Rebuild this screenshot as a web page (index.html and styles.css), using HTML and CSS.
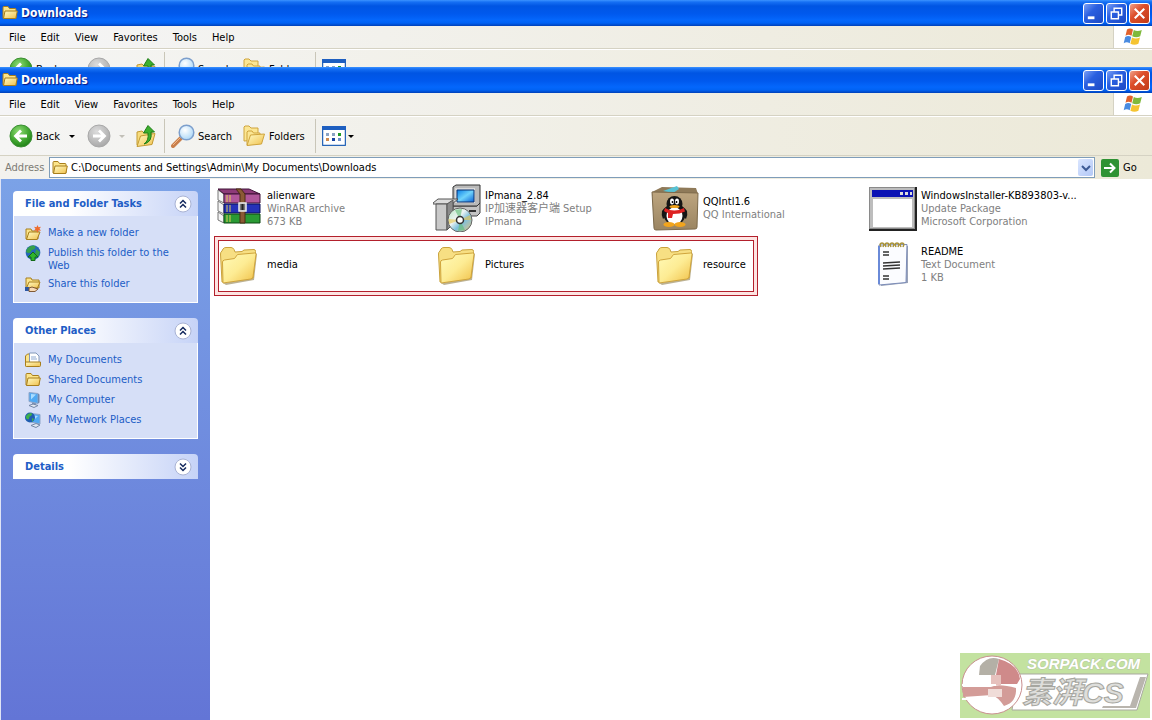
FILE: index.html
```html
<!DOCTYPE html>
<html lang="en">
<head>
  <meta charset="UTF-8" />
  <meta name="viewport" content="width=device-width, initial-scale=1" />
  <title>Downloads</title>
  <link rel="stylesheet" href="styles.css">
</head>
<body>
  <svg class="sprite" width="0" height="0" aria-hidden="true">
    <defs>
      <linearGradient id="gFolder" x1="0" y1="0" x2="1" y2="1">
        <stop offset="0" stop-color="#fffbc4" />
        <stop offset="1" stop-color="#f0c04c" />
      </linearGradient>
      <linearGradient id="gBigFolder" x1="0" y1="0" x2="1" y2="1">
        <stop offset="0" stop-color="#fffab8" />
        <stop offset="0.5" stop-color="#fdec94" />
        <stop offset="1" stop-color="#f0bf45" />
      </linearGradient>
      <radialGradient id="gGreen" cx="0.4" cy="0.3" r="0.75">
        <stop offset="0" stop-color="#8fdc74" />
        <stop offset="0.6" stop-color="#3fa52f" />
        <stop offset="1" stop-color="#1d7d14" />
      </radialGradient>
      <radialGradient id="gGrey" cx="0.4" cy="0.3" r="0.8">
        <stop offset="0" stop-color="#dcdcdc" />
        <stop offset="1" stop-color="#a2a2a2" />
      </radialGradient>
      <radialGradient id="gLens" cx="0.4" cy="0.35" r="0.7">
        <stop offset="0" stop-color="#ffffff" />
        <stop offset="1" stop-color="#a9d6f7" />
      </radialGradient>
      <linearGradient id="gScreen" x1="0" y1="0" x2="1" y2="1">
        <stop offset="0" stop-color="#0a7fe8" />
        <stop offset="0.5" stop-color="#6fd3fb" />
        <stop offset="1" stop-color="#0a62d8" />
      </linearGradient>
      <linearGradient id="gBox" x1="0" y1="0" x2="0" y2="1">
        <stop offset="0" stop-color="#bda57f" />
        <stop offset="1" stop-color="#9b8562" />
      </linearGradient>
      <linearGradient id="gCd" x1="0" y1="0" x2="1" y2="1">
        <stop offset="0" stop-color="#b7e4c0" />
        <stop offset="0.4" stop-color="#eef4f4" />
        <stop offset="0.6" stop-color="#7ec0dc" />
        <stop offset="1" stop-color="#e6c37b" />
      </linearGradient>

      <symbol id="folder" viewBox="0 0 16 16">
        <path d="M1 13V2.500q0-1 1-1h4l1.500 2h5.500q1 0 1 1V13z" fill="#fbe48a" stroke="#a87e1c" />
        <path d="M1.500 13.500L3 6h12.300L13.800 13.500z" fill="url(#gFolder)" stroke="#a87e1c" />
      </symbol>
      <symbol id="back" viewBox="0 0 24 24">
        <circle cx="12" cy="12" r="11" fill="url(#gGreen)" stroke="#3b8f33" />
        <path d="M18 12H7.500M12 6.500L6.500 12l5.500 5.500" fill="none" stroke="#fff" stroke-width="2.800" />
      </symbol>
      <symbol id="forward" viewBox="0 0 24 24">
        <circle cx="12" cy="12" r="11" fill="url(#gGrey)" stroke="#a8a8a8" />
        <path d="M6 12h10.500M12 6.500l5.500 5.500-5.500 5.500" fill="none" stroke="#fff" stroke-width="2.800" />
      </symbol>
      <symbol id="up" viewBox="0 0 24 24">
        <path d="M3 21V8l5-1 1.500 1.500L18 8v11z" fill="#f7dc7d" stroke="#c39a32" />
        <path d="M3 22.500L6.500 12 21 9.500 18 20.500z" fill="url(#gFolder)" stroke="#c39a32" />
        <path d="M10 20q5-3 4-11h-4.500L14 1.500 20.500 8h-3.500q1.500 10-7 12z" fill="#3db02e" stroke="#1f7d17" />
      </symbol>
      <symbol id="search" viewBox="0 0 24 24">
        <path d="M2 22l8-8" stroke="#c97f4b" stroke-width="4" stroke-linecap="round" />
        <path d="M2 21l8-8" stroke="#f0b88a" stroke-width="1" />
        <circle cx="15.500" cy="8.500" r="7.300" fill="url(#gLens)" stroke="#7d9fcc" stroke-width="1.500" />
      </symbol>
      <symbol id="folders" viewBox="0 0 24 24">
        <path d="M2 17V3l1-1h4l2 2h7v12z" fill="#fbe694" stroke="#cfa43c" />
        <path d="M5 21V8l1-1h4l1.500 2H18v10z" fill="#fbe694" stroke="#cfa43c" />
        <path d="M5 21.500l3.500-10.500L22.500 10l-3 10z" fill="url(#gFolder)" stroke="#cfa43c" />
      </symbol>
      <symbol id="views" viewBox="0 0 24 20">
        <rect x="0.500" y="0.500" width="23" height="19" rx="1" fill="#fff" stroke="#2866b8" stroke-width="1.500" />
        <path d="M0 0h24v4H0z" fill="#1e5fc0" />
        <path d="M4 7h3v3H4zM10 7h3v3h-3z" fill="#8ba3c4" />
        <path d="M16 7h3v3h-3z" fill="#1f9a26" />
        <path d="M4 12h3v3H4z" fill="#d08b4e" />
        <path d="M10 12h3v3h-3z" fill="#1642a0" />
        <path d="M16 12h3v3h-3z" fill="#6f90c8" />
      </symbol>
      <symbol id="flag" viewBox="0 0 20 20">
        <path d="M4 2.500q3-2 6 0L8.500 8.800q-3-2-6 0z" fill="#e2622b" />
        <path d="M10.800 3q3.500 2 8 0L17.200 9.200q-4 2-8 0z" fill="#7fb93c" />
        <path d="M2.200 10q3-2 6 0L6.700 16.300q-3-2-6 0z" fill="#4a8be0" />
        <path d="M9 10.500q3.500 2 8 0L15.400 16.800q-4 2-8 0z" fill="#f5c431" />
      </symbol>
      <symbol id="chev-up" viewBox="0 0 18 18">
        <circle cx="9" cy="9" r="8" fill="#fff" stroke="#a9b3d4" />
        <path d="M6 8.500l3-3 3 3M6 12.500l3-3 3 3" fill="none" stroke="#14295e" stroke-width="1.500" />
      </symbol>
      <symbol id="chev-down" viewBox="0 0 18 18">
        <circle cx="9" cy="9" r="8" fill="#fff" stroke="#a9b3d4" />
        <path d="M6 5.500l3 3 3-3M6 9.500l3 3 3-3" fill="none" stroke="#14295e" stroke-width="1.500" />
      </symbol>
      <symbol id="big-folder" viewBox="0 0 48 48">
        <path d="M8 43l30-5 3-25 1 1-3 26-28 5z" fill="#8f7f4c" opacity="0.600" />
        <path d="M7 42L5.500 14q0-2 1.500-3l1-2q1-1.500 3-1.500h5q2 0 3 2l1 2.500 7-.5 2-1.500 10-.5q1.500 0 1.500 2L38 38z" fill="#f7df83" stroke="#c9a23c" />
        <path d="M8 43L7.500 22q0-1.500 2-2l10-1.500 3-4L39.500 13q1.500 0 1.500 1.500L38 37q-.3 1.500-2 2z" fill="url(#gBigFolder)" stroke="#d0a53c" />
      </symbol>
    </defs>
  </svg>

  <!-- window behind, only its top strip shows -->
  <div class="window window-behind">
    <header class="titlebar">
      <svg class="icon16"><use href="#folder" /></svg>
      <h2>Downloads</h2>
      <div class="controls">
        <button class="ctl" aria-label="Minimize"><svg viewBox="0 0 20 20"><path d="M4 13h7v3H4z" fill="#fff" /></svg></button>
        <button class="ctl" aria-label="Restore"><svg viewBox="0 0 20 20"><path d="M7.500 8V4.500h8v7H12M4.500 8.500h7.500v7H4.500z" fill="none" stroke="#fff" stroke-width="1.500" /></svg></button>
        <button class="ctl ctl-close" aria-label="Close"><svg viewBox="0 0 20 20"><path d="M5 5l10 10M15 5L5 15" stroke="#fff" stroke-width="2.200" /></svg></button>
      </div>
    </header>
    <nav class="menubar">
      <button>File</button>
      <button>Edit</button>
      <button>View</button>
      <button>Favorites</button>
      <button>Tools</button>
      <button>Help</button>
      <span class="brand"><svg><use href="#flag" /></svg></span>
    </nav>
    <div class="toolbar">
      <button class="tool tool-back"><svg class="icon24"><use href="#back" /></svg>Back<i class="arrow"></i></button>
      <button class="tool tool-forward" aria-label="Forward" disabled><svg class="icon24"><use href="#forward" /></svg><i class="arrow"></i></button>
      <button class="tool" aria-label="Up"><svg class="icon24"><use href="#up" /></svg></button>
      <span class="sep"></span>
      <button class="tool tool-search"><svg class="icon24"><use href="#search" /></svg>Search</button>
      <button class="tool tool-folders"><svg class="icon24"><use href="#folders" /></svg>Folders</button>
      <span class="sep"></span>
      <button class="tool tool-views" aria-label="Views"><svg class="icon-views"><use href="#views" /></svg><i class="arrow"></i></button>
    </div>
  </div>

  <div class="window window-front">
    <header class="titlebar">
      <svg class="icon16"><use href="#folder" /></svg>
      <h1>Downloads</h1>
      <div class="controls">
        <button class="ctl" aria-label="Minimize"><svg viewBox="0 0 20 20"><path d="M4 13h7v3H4z" fill="#fff" /></svg></button>
        <button class="ctl" aria-label="Restore"><svg viewBox="0 0 20 20"><path d="M7.500 8V4.500h8v7H12M4.500 8.500h7.500v7H4.500z" fill="none" stroke="#fff" stroke-width="1.500" /></svg></button>
        <button class="ctl ctl-close" aria-label="Close"><svg viewBox="0 0 20 20"><path d="M5 5l10 10M15 5L5 15" stroke="#fff" stroke-width="2.200" /></svg></button>
      </div>
    </header>
    <nav class="menubar">
      <button>File</button>
      <button>Edit</button>
      <button>View</button>
      <button>Favorites</button>
      <button>Tools</button>
      <button>Help</button>
      <span class="brand"><svg><use href="#flag" /></svg></span>
    </nav>
    <div class="toolbar">
      <button class="tool tool-back"><svg class="icon24"><use href="#back" /></svg>Back<i class="arrow"></i></button>
      <button class="tool tool-forward" aria-label="Forward" disabled><svg class="icon24"><use href="#forward" /></svg><i class="arrow"></i></button>
      <button class="tool" aria-label="Up"><svg class="icon24"><use href="#up" /></svg></button>
      <span class="sep"></span>
      <button class="tool tool-search"><svg class="icon24"><use href="#search" /></svg>Search</button>
      <button class="tool tool-folders"><svg class="icon24"><use href="#folders" /></svg>Folders</button>
      <span class="sep"></span>
      <button class="tool tool-views" aria-label="Views"><svg class="icon-views"><use href="#views" /></svg><i class="arrow"></i></button>
    </div>
    <form class="addressbar">
      <label for="address">Address</label>
      <div class="address-box">
        <svg class="icon16"><use href="#folder" /></svg>
        <input type="text" id="address" value="C:\Documents and Settings\Admin\My Documents\Downloads" />
        <button type="button" class="drop" aria-label="Show addresses"><svg viewBox="0 0 10 8"><path d="M1 2l4 4 4-4" fill="none" stroke="#3d5a94" stroke-width="2" /></svg></button>
      </div>
      <button type="button" class="go"><svg viewBox="0 0 18 18"><rect width="18" height="18" rx="2" fill="#2f9233" /><path d="M3 9h10M9 4.500L13.500 9 9 13.500" fill="none" stroke="#fff" stroke-width="2" /></svg>Go</button>
    </form>

    <div class="content">
      <aside class="sidebar">
        <section class="panel">
          <div class="panel-head">
            <h3>File and Folder Tasks</h3>
            <button class="toggle" aria-label="Collapse"><svg><use href="#chev-up" /></svg></button>
          </div>
          <ul>
            <li><a href="#">
              <svg class="icon16" viewBox="0 0 16 16"><path d="M1 14V4h5l1 2h6v8z" fill="#fbe48a" stroke="#a87e1c" /><path d="M1.500 14.500L4 7h11l-3 7.500z" fill="url(#gFolder)" stroke="#a87e1c" /><path d="M12.500 0l1 2.200 2.500-.5-1.500 2 1.500 2-2.500-.3-1 2.400-1-2.400-2.500.3 1.500-2-1.500-2 2.500.5z" fill="#ee6b2d" /></svg>
              <span>Make a new folder</span></a></li>
            <li><a href="#">
              <svg class="icon16" viewBox="0 0 16 16"><circle cx="8" cy="7.500" r="7.300" fill="#2467b8" /><path d="M2 4q3-4 7-3.500 3 2 0 4-3-.5-3 2.500-2 2-5 0zM11 4l4 3-2 5-3-3z" fill="#35a04a" /><path d="M8 7l5 5h-3v3.500H6V12H3z" fill="#2fb52c" stroke="#126b18" /></svg>
              <span>Publish this folder to the Web</span></a></li>
            <li><a href="#">
              <svg class="icon16" viewBox="0 0 16 16"><path d="M1 12V2h5l1 2h7v8z" fill="#fbe48a" stroke="#a87e1c" /><path d="M1.500 12L4 6h11l-2.500 6z" fill="url(#gFolder)" stroke="#a87e1c" /><path d="M0 11h4v4H0z" fill="#2b57a5" /><path d="M4 12l3-1 6 2-3 2.500H4z" fill="#f7d9b5" stroke="#805a35" /></svg>
              <span>Share this folder</span></a></li>
          </ul>
        </section>

        <section class="panel">
          <div class="panel-head">
            <h3>Other Places</h3>
            <button class="toggle" aria-label="Collapse"><svg><use href="#chev-up" /></svg></button>
          </div>
          <ul>
            <li><a href="#">
              <svg class="icon16" viewBox="0 0 16 16"><path d="M.5 14V4l2-2H7v12z" fill="#fbe48a" stroke="#a87e1c" /><path d="M4.500 1H11l3 3v8H4.500z" fill="#fff" stroke="#8398b8" /><path d="M6 5h5M6 7h6" stroke="#8fa9d0" /><path d="M1.500 14.500q-1 0-1-1V10h15v3.500q0 1-1 1z" fill="url(#gFolder)" stroke="#a87e1c" /></svg>
              <span>My Documents</span></a></li>
            <li><a href="#"><svg class="icon16"><use href="#folder" /></svg><span>Shared Documents</span></a></li>
            <li><a href="#">
              <svg class="icon16" viewBox="0 0 16 16"><path d="M4 0.500l9 1v10L4 9.500z" fill="#4fa9f3" stroke="#8ea5c8" /><path d="M6 2l5 .5-5 5z" fill="#a9dcff" /><path d="M13 1.500l1.500 1v8L13 11.500z" fill="#7088ad" /><path d="M7 10.500l4 .8V13H7z" fill="#7d94b5" /><path d="M4 13.500l4-1.500 5 1.500-4 2z" fill="#e3e9f2" stroke="#7386a6" /></svg>
              <span>My Computer</span></a></li>
            <li><a href="#">
              <svg class="icon16" viewBox="0 0 16 16"><path d="M6 1.500l9 1v9.500L6 10z" fill="#4fa9f3" stroke="#8ea5c8" /><path d="M9 3.500l4 .5-4 4z" fill="#a9dcff" /><path d="M6 13.500l5-2 4 1.500-4 2.500z" fill="#e3e9f2" stroke="#7386a6" /><circle cx="5" cy="5.500" r="5" fill="#1f5db0" /><path d="M1 4q2-3 5-3 2 1 0 3-2 0-2 3-2 1-3-1zM7 6l2 1-2 3z" fill="#3db04a" /></svg>
              <span>My Network Places</span></a></li>
          </ul>
        </section>

        <section class="panel">
          <div class="panel-head">
            <h3>Details</h3>
            <button class="toggle" aria-label="Expand"><svg><use href="#chev-down" /></svg></button>
          </div>
        </section>
      </aside>

      <main class="files">
        <div class="file">
          <svg class="icon48" viewBox="0 0 48 48">
            <path d="M3 6l6 4v9l-6-3zM3 17l6 4v9l-6-3zM3 28l6 4v7l-6-3z" fill="#f4f4f4" stroke="#777" />
            <path d="M3 5h31l11 5H9z" fill="#8d3a78" stroke="#3f1237" />
            <path d="M9 10h36v9H9z" fill="#b0569a" stroke="#3f1237" />
            <path d="M9 20h36v9H9z" fill="#2531b8" stroke="#0b1159" />
            <path d="M9 30h36v9H9z" fill="#2a9a34" stroke="#0c4712" />
            <path d="M12 11v7M15 11v7M12 21v7M15 21v7M12 31v7M15 31v7" stroke="#e2cf55" />
            <path d="M21 5h5l4 5v29h-5V10z" fill="#8b5a35" stroke="#4a2c14" />
            <rect x="24" y="19" width="7" height="8" fill="#777" stroke="#eee" stroke-width="1.500" />
            <path d="M27.500 20v6" stroke="#222" stroke-width="2" />
          </svg>
          <div class="info"><b>alienware</b><span>WinRAR archive</span><span>673 KB</span></div>
        </div>
        <div class="file">
          <svg class="icon48" viewBox="0 0 48 48">
            <path d="M20 22h24l3-3v10l-3 3H20z" fill="#c3c3c3" stroke="#444" />
            <path d="M36 27h7" stroke="#333" stroke-width="2" />
            <path d="M20 3l3-2h24v18l-3 3H20z" fill="#b9b9b9" stroke="#333" />
            <path d="M22 4h20v15H22z" fill="#d9d9d9" />
            <path d="M24 6h17v12H24z" fill="url(#gScreen)" stroke="#0b3372" />
            <path d="M0 19l5-4h20l-6 5H0z" fill="#dcdcdc" stroke="#555" />
            <path d="M3 20h11v26H3z" fill="#c9c9c9" stroke="#555" />
            <path d="M14 20l6-4v24l-6 6z" fill="#8b8b8b" stroke="#555" />
            <circle cx="27" cy="36" r="12" fill="url(#gCd)" stroke="#666" />
            <path d="M27 36l-5-10 7-1zM27 36l5 10-7 1z" fill="#5dbd75" opacity="0.600" />
            <path d="M27 36l10-5 1 5zM27 36l-11 4-.5-5z" fill="#eac44f" opacity="0.600" />
            <circle cx="27" cy="36" r="3.500" fill="#fff" stroke="#333" stroke-width="1.500" />
          </svg>
          <div class="info"><b>IPmana_2.84</b><span>IP加速器客户端 Setup</span><span>IPmana</span></div>
        </div>
        <div class="file">
          <svg class="icon48" viewBox="0 0 48 48">
            <path d="M1 8l10-5 34 1 2 6-1 2H1z" fill="#8f7a59" />
            <path d="M12 7l14-5 2 3-6 4z" fill="#57c2d4" />
            <path d="M1 8l46 1-1 34q0 2-2 2L5 46q-2 0-2-2z" fill="url(#gBox)" stroke="#7c694a" />
            <path d="M11 27q2-3 4-4l0 9-3 3q-2-4-1-8zM36 27q-2-3-4-4l0 9 3 3q2-4 1-8z" fill="#151515" />
            <ellipse cx="23.500" cy="30" rx="11" ry="11" fill="#151515" />
            <ellipse cx="23.500" cy="20" rx="8" ry="8" fill="#151515" />
            <ellipse cx="23.500" cy="32" rx="8" ry="8.500" fill="#fff" />
            <ellipse cx="18" cy="40.500" rx="5.500" ry="2.500" fill="#f2a51d" />
            <ellipse cx="29" cy="40.500" rx="5.500" ry="2.500" fill="#f2a51d" />
            <ellipse cx="21" cy="17.500" rx="2" ry="3" fill="#fff" />
            <ellipse cx="26" cy="17.500" rx="2" ry="3" fill="#fff" />
            <path d="M21.500 17v2M25.500 17v2" stroke="#111" stroke-width="1.500" />
            <ellipse cx="23.500" cy="22.500" rx="5" ry="1.600" fill="#f2a51d" />
            <path d="M14 24q9 5 19 0l1 3.500q-5 2.500-12 2.500l-1 4h-4v-5q-3-1-4-2z" fill="#dd2222" />
          </svg>
          <div class="info"><b>QQIntl1.6</b><span>QQ International</span></div>
        </div>
        <div class="file">
          <svg class="icon48" viewBox="0 0 48 48">
            <path d="M0 3h48v44H0z" fill="#222" />
            <path d="M0 3h46v42H0z" fill="#8a8a8a" />
            <path d="M1 4h44v40H1z" fill="#bdbdbd" />
            <path d="M3 6h41v7H3z" fill="#0a12b4" />
            <path d="M31 8h3v3h-3zM36 8h3v3h-3zM41 8h2v3h-2z" fill="#ddd" />
            <path d="M4 15h39v28H4z" fill="#fff" />
          </svg>
          <div class="info"><b>WindowsInstaller-KB893803-v...</b><span>Update Package</span><span>Microsoft Corporation</span></div>
        </div>
        <div class="file">
          <svg class="icon48"><use href="#big-folder" /></svg>
          <div class="info"><b>media</b></div>
        </div>
        <div class="file">
          <svg class="icon48"><use href="#big-folder" /></svg>
          <div class="info"><b>Pictures</b></div>
        </div>
        <div class="file">
          <svg class="icon48"><use href="#big-folder" /></svg>
          <div class="info"><b>resource</b></div>
        </div>
        <div class="file">
          <svg class="icon48" viewBox="0 0 48 48">
            <path d="M12 7l27-1 0 37-27 3z" fill="#9aa3b8" />
            <path d="M10 5l28-.5-1 38L10 45z" fill="#fbfcff" stroke="#7b8cb8" />
            <path d="M10 6v38" stroke="#6a8ad8" stroke-width="2" />
            <path d="M12 7q-2-4 1-4t1 4M17 7q-2-4 1-4t1 4M22 7q-2-4 1-4t1 4M27 7q-2-4 1-4t1 4M32 7q-2-4 1-4t1 4" fill="none" stroke="#a8923a" stroke-width="1.500" />
            <path d="M14 12h6M14 15h6M14 23l17-1M14 26l17-1M14 29l17-1M14 36h6M14 39h6" stroke="#333" stroke-width="1.300" />
          </svg>
          <div class="info"><b>README</b><span>Text Document</span><span>1 KB</span></div>
        </div>
        <div class="marker"></div>
      </main>
    </div>
  </div>

  <svg class="watermark" viewBox="0 0 190 65" role="img" aria-label="SORPACK.COM">
    <rect width="190" height="65" fill="#c3e2a0" />
    <path d="M58 21h130l-11 36H52z" fill="#fff" stroke="#a9a9a0" />
    <path d="M180 24h6l-10 31h-34l1-2h27z" fill="#b9b5ae" />
    <ellipse cx="32" cy="32" rx="30" ry="29" fill="#fff" stroke="#c98f8f" />
    <path d="M20 13Q28 2 39 6l-4 16H19z" fill="#b4b0a6" />
    <path d="M39 6q19 5 21 20l-3 5H36V22z" fill="#cf8a8a" />
    <path d="M31 22h10v10H31z" fill="#e6c1bd" />
    <path d="M3 34h28q7-4 25 1 1 14-12 18-6-9-12-11L3 44z" fill="#d39c98" />
    <path d="M28 36h14v8H28z" fill="#f0dcd8" />
    <path d="M2 32h34M2 46h28q4 2 6 8" fill="none" stroke="#fff" stroke-width="2" />
    <text class="wm-site" x="67" y="16">SORPACK.COM</text>
    <text class="wm-name" x="62" y="50">素湃CS</text>
  </svg>
</body>
</html>
```
FILE: styles.css
```css
* {
  box-sizing: border-box;
}

body {
  margin: 0;
  height: 100vh;
  display: flex;
  flex-direction: column;
  overflow: hidden;
  background: #fff;
  font-family: "DejaVu Sans Condensed", "DejaVu Sans", "Noto Sans CJK SC", sans-serif;
  font-size: 11px;
  line-height: 13px;
  color: #000;
}

button, input {
  font: inherit;
  color: inherit;
  border: none;
  background: none;
  padding: 0;
  margin: 0;
}

h1, h2, h3 {
  margin: 0;
}

svg {
  display: block;
  flex: none;
}

.sprite {
  position: absolute;
}

.icon16 {
  width: 16px;
  height: 16px;
}

.icon24 {
  width: 24px;
  height: 24px;
}

.icon48 {
  width: 48px;
  height: 48px;
}

.icon-views {
  width: 24px;
  height: 20px;
}

.window {
  display: flex;
  flex-direction: column;
}

.window > * {
  flex: none;
}

.window-behind {
  flex: 0 0 67px;
  overflow: hidden;
}

.window-front {
  flex: 1;
  min-height: 0;
}

/* title bar */

.titlebar {
  height: 26px;
  display: flex;
  align-items: center;
  gap: 3px;
  padding: 0 2px;
  background: linear-gradient(#3c93ff 0, #1670f4 2px, #0055e3 6px, #0059ee 14px, #0467fc 20px, #0062f4 23px, #0040b8 26px);
}

.titlebar h1, .titlebar h2 {
  flex: 1;
  font-size: 12px;
  line-height: 16px;
  font-weight: bold;
  color: #fff;
  text-shadow: 1px 1px 1px #0a1883;
}

.controls {
  display: flex;
  gap: 2px;
}

.ctl {
  width: 21px;
  height: 21px;
  border: 1px solid #fff;
  border-radius: 3px;
  background: linear-gradient(135deg, #7ba0f5, #2a5fe0 40%, #1c49c4);
}

.ctl svg {
  width: 19px;
  height: 19px;
}

.ctl-close {
  background: linear-gradient(135deg, #f0a18a, #dd4f2c 40%, #c23a17);
}

/* menus */

.menubar {
  height: 23px;
  display: flex;
  align-items: stretch;
  padding-left: 2px;
  background: linear-gradient(to right, #f5f5f6, #ece9d8);
  border-bottom: 1px solid #d5d2c3;
}

.menubar button {
  padding: 0 8px 0 7px;
}

.brand {
  margin-left: auto;
  width: 39px;
  display: flex;
  align-items: center;
  justify-content: center;
  background: #fff;
  border-left: 1px solid #d5d2c3;
}

.brand svg {
  width: 20px;
  height: 20px;
}

/* toolbar */

.toolbar {
  height: 40px;
  display: flex;
  align-items: center;
  padding-left: 9px;
  background: linear-gradient(to right, #f5f5f4, #ece9d8);
  border-top: 1px solid #fff;
  border-bottom: 1px solid #d5d2c3;
}

.tool {
  display: flex;
  align-items: center;
  gap: 3px;
}

.tool-back {
  margin-right: 12px;
}

.tool-back .arrow {
  margin-left: 6px;
}

.tool-forward {
  gap: 8px;
  margin-right: 9px;
}

.tool-search {
  margin-right: 10px;
}

.tool-folders {
  margin-right: 4px;
}

.tool-views {
  gap: 2px;
}

.arrow {
  border: 3px solid transparent;
  border-top-color: #000;
  border-bottom: none;
}

.tool-forward .arrow {
  border-top-color: #c2c0b8;
}

.sep {
  align-self: stretch;
  width: 1px;
  margin: 2px 6px;
  background: #c9c6b8;
}

/* address bar */

.addressbar {
  height: 23px;
  display: flex;
  align-items: stretch;
  margin: 0;
  padding: 1px 0;
  background: linear-gradient(to right, #f3f2ee, #ece9d8);
}

.addressbar label {
  width: 49px;
  padding-left: 5px;
  align-self: center;
  color: #7d7b74;
}

.address-box {
  flex: 1;
  display: flex;
  align-items: center;
  padding: 0 1px 0 2px;
  background: #fff;
  border: 1px solid #7f9db9;
}

.address-box input {
  flex: 1;
  height: 17px;
  padding: 0 3px;
  outline: none;
}

.drop {
  width: 15px;
  height: 17px;
  display: flex;
  align-items: center;
  justify-content: center;
  border-radius: 2px;
  background: linear-gradient(135deg, #dbe6ff, #b2c8f6);
}

.drop svg {
  width: 10px;
  height: 8px;
}

.go {
  width: 57px;
  display: flex;
  align-items: center;
  gap: 4px;
  padding-left: 6px;
}

.go svg {
  width: 18px;
  height: 18px;
}

/* content */

.window .content {
  flex: 1;
  min-height: 0;
  display: flex;
}

.sidebar {
  width: 210px;
  padding: 12px;
  border-left: 1px solid #dfe4f5;
  display: flex;
  flex-direction: column;
  gap: 15px;
  background: linear-gradient(#7ba2e7, #6375d6);
}

.panel-head {
  height: 25px;
  display: flex;
  align-items: center;
  justify-content: space-between;
  padding: 0 6px 0 12px;
  border-radius: 4px 4px 0 0;
  background: linear-gradient(to right, #fff 30%, #c6d3f7);
}

.panel-head h3 {
  font-size: 11px;
  color: #215dc6;
}

.toggle svg {
  width: 18px;
  height: 18px;
}

.panel ul {
  list-style: none;
  margin: 0;
  padding: 9px 11px 10px;
  display: flex;
  flex-direction: column;
  gap: 4px;
  background: #d6dff7;
  border: 1px solid #fff;
  border-top: none;
}

.panel a {
  display: flex;
  gap: 7px;
  color: #215dc6;
  text-decoration: none;
}

.panel a span {
  padding-top: 1px;
}

.files {
  flex: 1;
  position: relative;
  display: grid;
  grid-template-columns: repeat(auto-fill, 218px);
  grid-auto-rows: 48px;
  align-content: start;
  row-gap: 8px;
  padding: 5px 0 0 5px;
}

.file {
  display: flex;
  align-items: center;
  gap: 4px;
}

.info {
  display: flex;
  flex-direction: column;
  white-space: nowrap;
}

.info b {
  font-weight: normal;
}

.info span {
  color: #808080;
}

/* red frame over the three folders */
.marker {
  position: absolute;
  left: 4px;
  top: 57px;
  width: 544px;
  height: 60px;
  border: 1px solid #b3202c;
  box-shadow: inset 0 0 0 3px #fde4e2, inset 0 0 0 4px #b3202c;
  pointer-events: none;
}

.watermark {
  position: absolute;
  right: 2px;
  bottom: 2px;
  width: 190px;
  height: 65px;
}

.wm-site {
  font-family: "Liberation Sans", sans-serif;
  font-size: 15px;
  font-weight: bold;
  font-style: italic;
  fill: #fff;
  stroke: #b9c7a5;
  stroke-width: 1px;
  paint-order: stroke;
}

.wm-name {
  font-family: "Liberation Sans", "Noto Sans CJK SC", sans-serif;
  font-size: 30px;
  font-weight: bold;
  font-style: italic;
  fill: #dededb;
  stroke: #a6a6a0;
  stroke-width: 1px;
}
```
